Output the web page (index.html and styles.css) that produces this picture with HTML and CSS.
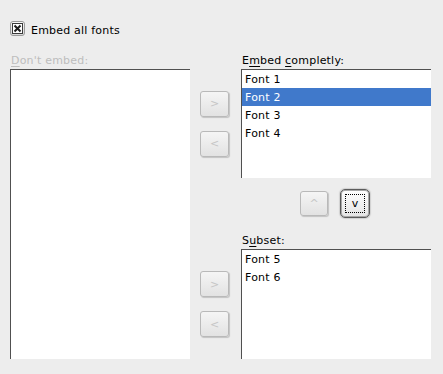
FILE: index.html
```html
<!DOCTYPE html>
<html lang="en">
<head>
    <meta charset="UTF-8">
    <title>Font Embedding</title>
    <link rel="stylesheet" href="styles.css">
</head>
<body>

    <div class="top">
        <svg class="check" width="15" height="15" viewBox="0 0 15 15">
            <defs>
                <linearGradient id="cb" x1="0" y1="0" x2="0" y2="1">
                    <stop offset="0" stop-color="#fafafa"/>
                    <stop offset="1" stop-color="#d8d8d8"/>
                </linearGradient>
            </defs>
            <rect x="0.5" y="0.5" width="14" height="14" rx="2.5" fill="url(#cb)" stroke="#9a9a9a"/>
            <rect x="2.5" y="2.5" width="10" height="10" fill="#fff" stroke="#3a3a3a"/>
            <path d="M4.5 4.5 L10.5 10.5 M10.5 4.5 L4.5 10.5" stroke="#1e1e1e" stroke-width="2"/>
        </svg>
        <span class="check-text">Embed all fonts</span>
    </div>

    <div class="main">
        <div class="label disabled left-label"><u>D</u>on't embed:</div>
        <div class="list left-list"></div>

        <div class="label right-label">E<u>m</u>bed <u>c</u>ompletly:</div>

        <div class="movers movers-top">
            <button class="btn">&gt;</button>
            <button class="btn">&lt;</button>
        </div>
        <div class="list full-list">
            <div class="item">Font 1</div>
            <div class="item selected">Font 2</div>
            <div class="item">Font 3</div>
            <div class="item">Font 4</div>
        </div>

        <div class="order">
            <button class="btn">^</button>
            <button class="btn default"><span class="focus">v</span></button>
        </div>

        <div class="label subset-label">S<u>u</u>bset:</div>

        <div class="movers movers-bottom">
            <button class="btn">&gt;</button>
            <button class="btn">&lt;</button>
        </div>
        <div class="list subset-list">
            <div class="item">Font 5</div>
            <div class="item">Font 6</div>
        </div>
    </div>

</body>
</html>
```

FILE: styles.css
```css
body {
    margin: 0;
    width: 443px;
    height: 374px;
    background: #ededed;
    font-family: "DejaVu Sans", sans-serif;
    font-size: 11px;
    letter-spacing: 0.2px;
    color: #000;
}
u { text-decoration: underline; text-underline-offset: 2px; }

.top {
    display: flex;
    align-items: center;
    gap: 6px;
    padding: 21px 0 0 10px;
    height: 15px;
}
.check { display: block; }
.check-text { padding-top: 3px; }

.main {
    display: grid;
    grid-template-columns: 180px 51px 190px;
    grid-template-rows: 18px 109px 53px 18px 110px;
    margin: 15px 0 0 10px;
}
.label { line-height: 16px; padding: 2px 0 0 1px; }
.disabled { color: #bdbdbd; }
.left-label { grid-column: 1; grid-row: 1; }
.right-label { grid-column: 3; grid-row: 1; }
.subset-label { grid-column: 3; grid-row: 4; }

.list {
    background: #fff;
    border-top: 1px solid #505050;
    border-left: 1px solid #505050;
}
.left-list { grid-column: 1; grid-row: 2 / 6; }
.full-list { grid-column: 3; grid-row: 2; }
.subset-list { grid-column: 3; grid-row: 5; }

.item {
    height: 18px;
    line-height: 20px;
    padding-left: 3px;
}
.selected { background: #4079cb; color: #fff; }

.movers {
    display: flex;
    flex-direction: column;
    justify-content: center;
    gap: 14px;
    padding-left: 10px;
}
.movers-top { grid-column: 2; grid-row: 2; }
.movers-bottom { grid-column: 2; grid-row: 5; }

.btn {
    width: 29px;
    height: 26px;
    padding: 0;
    border: 1px solid #b9b9b9;
    border-radius: 3px;
    background: linear-gradient(#f5f5f5, #e2e2e2);
    box-shadow: 1px 1px 1px rgba(0, 0, 0, 0.18);
    color: #c6c6c6;
    font-family: "DejaVu Sans", sans-serif;
    font-size: 11px;
}

.order {
    grid-column: 3;
    grid-row: 3;
    display: flex;
    justify-content: center;
    align-items: flex-start;
    gap: 12px;
    padding: 13px 2px 0 0;
}
.order .btn { width: 28px; height: 25px; }
.order .default {
    width: 30px;
    height: 29px;
    margin-top: -2px;
    border: 1px solid #5c5c5c;
    border-radius: 5px;
    background: linear-gradient(#ffffff, #e4e4e4);
    box-shadow: inset 0 0 0 1px #a8a8a8, 0 0 1px 1px #d0d0d0;
    color: #000;
    display: flex;
    padding: 4px;
}
.focus {
    flex: 1;
    border: 1px dotted #000;
    line-height: 17px;
    text-align: center;
}
```
